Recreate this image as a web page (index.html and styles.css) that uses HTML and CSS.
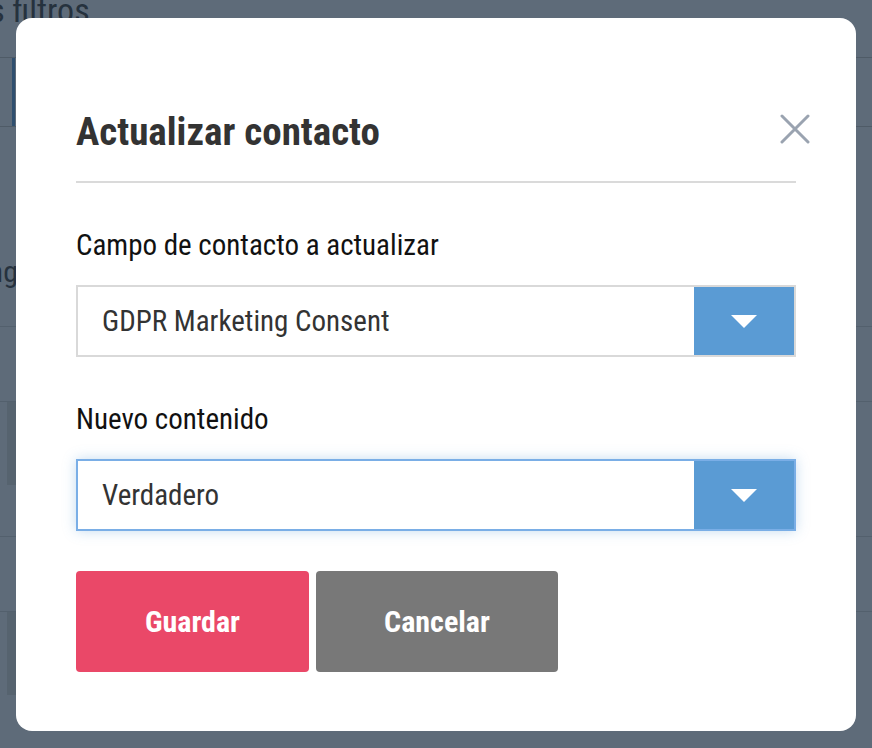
FILE: index.html
```html
<!DOCTYPE html>
<html lang="es">
<head>
  <meta charset="UTF-8" />
  <meta name="viewport" content="width=device-width, initial-scale=1.0" />
  <title>Actualizar contacto</title>
  <link rel="stylesheet" href="styles.css">
</head>
<body>
  <div class="page">
    <h2 class="page-title">Todos los filtros</h2>
    <div class="filter-bar"><span class="filter-mark"></span></div>
    <div class="page-gap"></div>
    <h3 class="page-sub">Listing</h3>
    <div class="row"></div>
    <div class="row tall"><span class="row-box"></span></div>
    <div class="row"></div>
    <div class="row tall"><span class="row-box"></span></div>
  </div>

  <div class="overlay">
    <div class="modal">
      <button class="modal-close" aria-label="Cerrar">
        <svg width="30" height="30" viewBox="0 0 30 30">
          <path d="M2 2 L28 28 M28 2 L2 28" stroke="#9aa3b0" stroke-width="3" stroke-linecap="round" fill="none"/>
        </svg>
      </button>
      <h1 class="modal-title">Actualizar contacto</h1>

      <label class="field-label">Campo de contacto a actualizar</label>
      <div class="select">
        <span class="select-value">GDPR Marketing Consent</span>
        <span class="select-arrow"><span class="caret"></span></span>
      </div>

      <label class="field-label">Nuevo contenido</label>
      <div class="select focused">
        <span class="select-value">Verdadero</span>
        <span class="select-arrow"><span class="caret"></span></span>
      </div>

      <div class="actions">
        <button class="btn btn-save">Guardar</button>
        <button class="btn btn-cancel">Cancelar</button>
      </div>
    </div>
  </div>
</body>
</html>
```

FILE: styles.css
```css
body {
  margin: 0;
  background: #5e6b79;
  font-family: "Roboto Condensed", "Liberation Sans Narrow", Roboto, sans-serif;
  overflow: hidden;
}
.page {
  height: 748px;
}
.page-title {
  margin: -12px 0 0 -126px;
  font-size: 34px;
  line-height: 44px;
  font-weight: 400;
  color: #26323e;
  height: 69px;
}
.filter-bar {
  height: 68px;
  border-top: 1px solid #4f5b67;
  border-bottom: 1px solid #4f5b67;
}
.filter-mark {
  display: block;
  margin-left: 12px;
  width: 3px;
  height: 68px;
  background: #2f4f6f;
}
.page-gap {
  height: 125px;
}
.page-sub {
  margin: 0 0 0 -62px;
  font-size: 30px;
  font-weight: 400;
  color: #26323e;
  height: 74px;
  line-height: 40px;
}
.row {
  height: 74px;
  border-top: 1px solid #53606d;
}
.row.tall {
  height: 134px;
}
.row-box {
  display: block;
  margin: 0 0 0 7px;
  width: 10px;
  height: 83px;
  background: #56636f;
}

.overlay {
  position: fixed;
  inset: 0;
  padding: 18px 16px;
}
.modal {
  position: relative;
  background: #fff;
  border-radius: 16px;
  height: 713px;
  box-sizing: border-box;
  padding: 92px 60px 60px;
}
.modal-close {
  position: absolute;
  top: 96px;
  right: 46px;
  border: none;
  background: none;
  padding: 0;
  cursor: pointer;
}
.modal-title {
  margin: 0;
  font-size: 39px;
  font-weight: 700;
  color: #333;
  line-height: 44px;
  padding-bottom: 27px;
  border-bottom: 2px solid #dadada;
}
.field-label {
  display: block;
  margin: 46px 0 24px;
  font-size: 29px;
  line-height: 32px;
  color: #111;
}
.select {
  display: flex;
  height: 72px;
  border: 2px solid #d9d9d9;
  box-sizing: border-box;
  background: #fff;
}
.select.focused {
  border-color: #7aaee6;
  box-shadow: 0 0 12px rgba(90, 155, 212, 0.35);
}
.select-value {
  flex: 1;
  display: flex;
  align-items: center;
  padding-left: 24px;
  font-size: 29px;
  color: #333;
}
.select-arrow {
  width: 100px;
  background: #5a9bd4;
  display: flex;
  align-items: center;
  justify-content: center;
}
.caret {
  width: 0;
  height: 0;
  border-left: 13px solid transparent;
  border-right: 13px solid transparent;
  border-top: 13px solid #fff;
}
.actions {
  display: flex;
  gap: 7px;
  margin-top: 40px;
}
.btn {
  height: 101px;
  border: none;
  border-radius: 4px;
  color: #fff;
  font-family: inherit;
  font-size: 30px;
  font-weight: 700;
  cursor: pointer;
}
.btn-save {
  width: 233px;
  background: #ea4868;
}
.btn-cancel {
  width: 242px;
  background: #787878;
}
```
